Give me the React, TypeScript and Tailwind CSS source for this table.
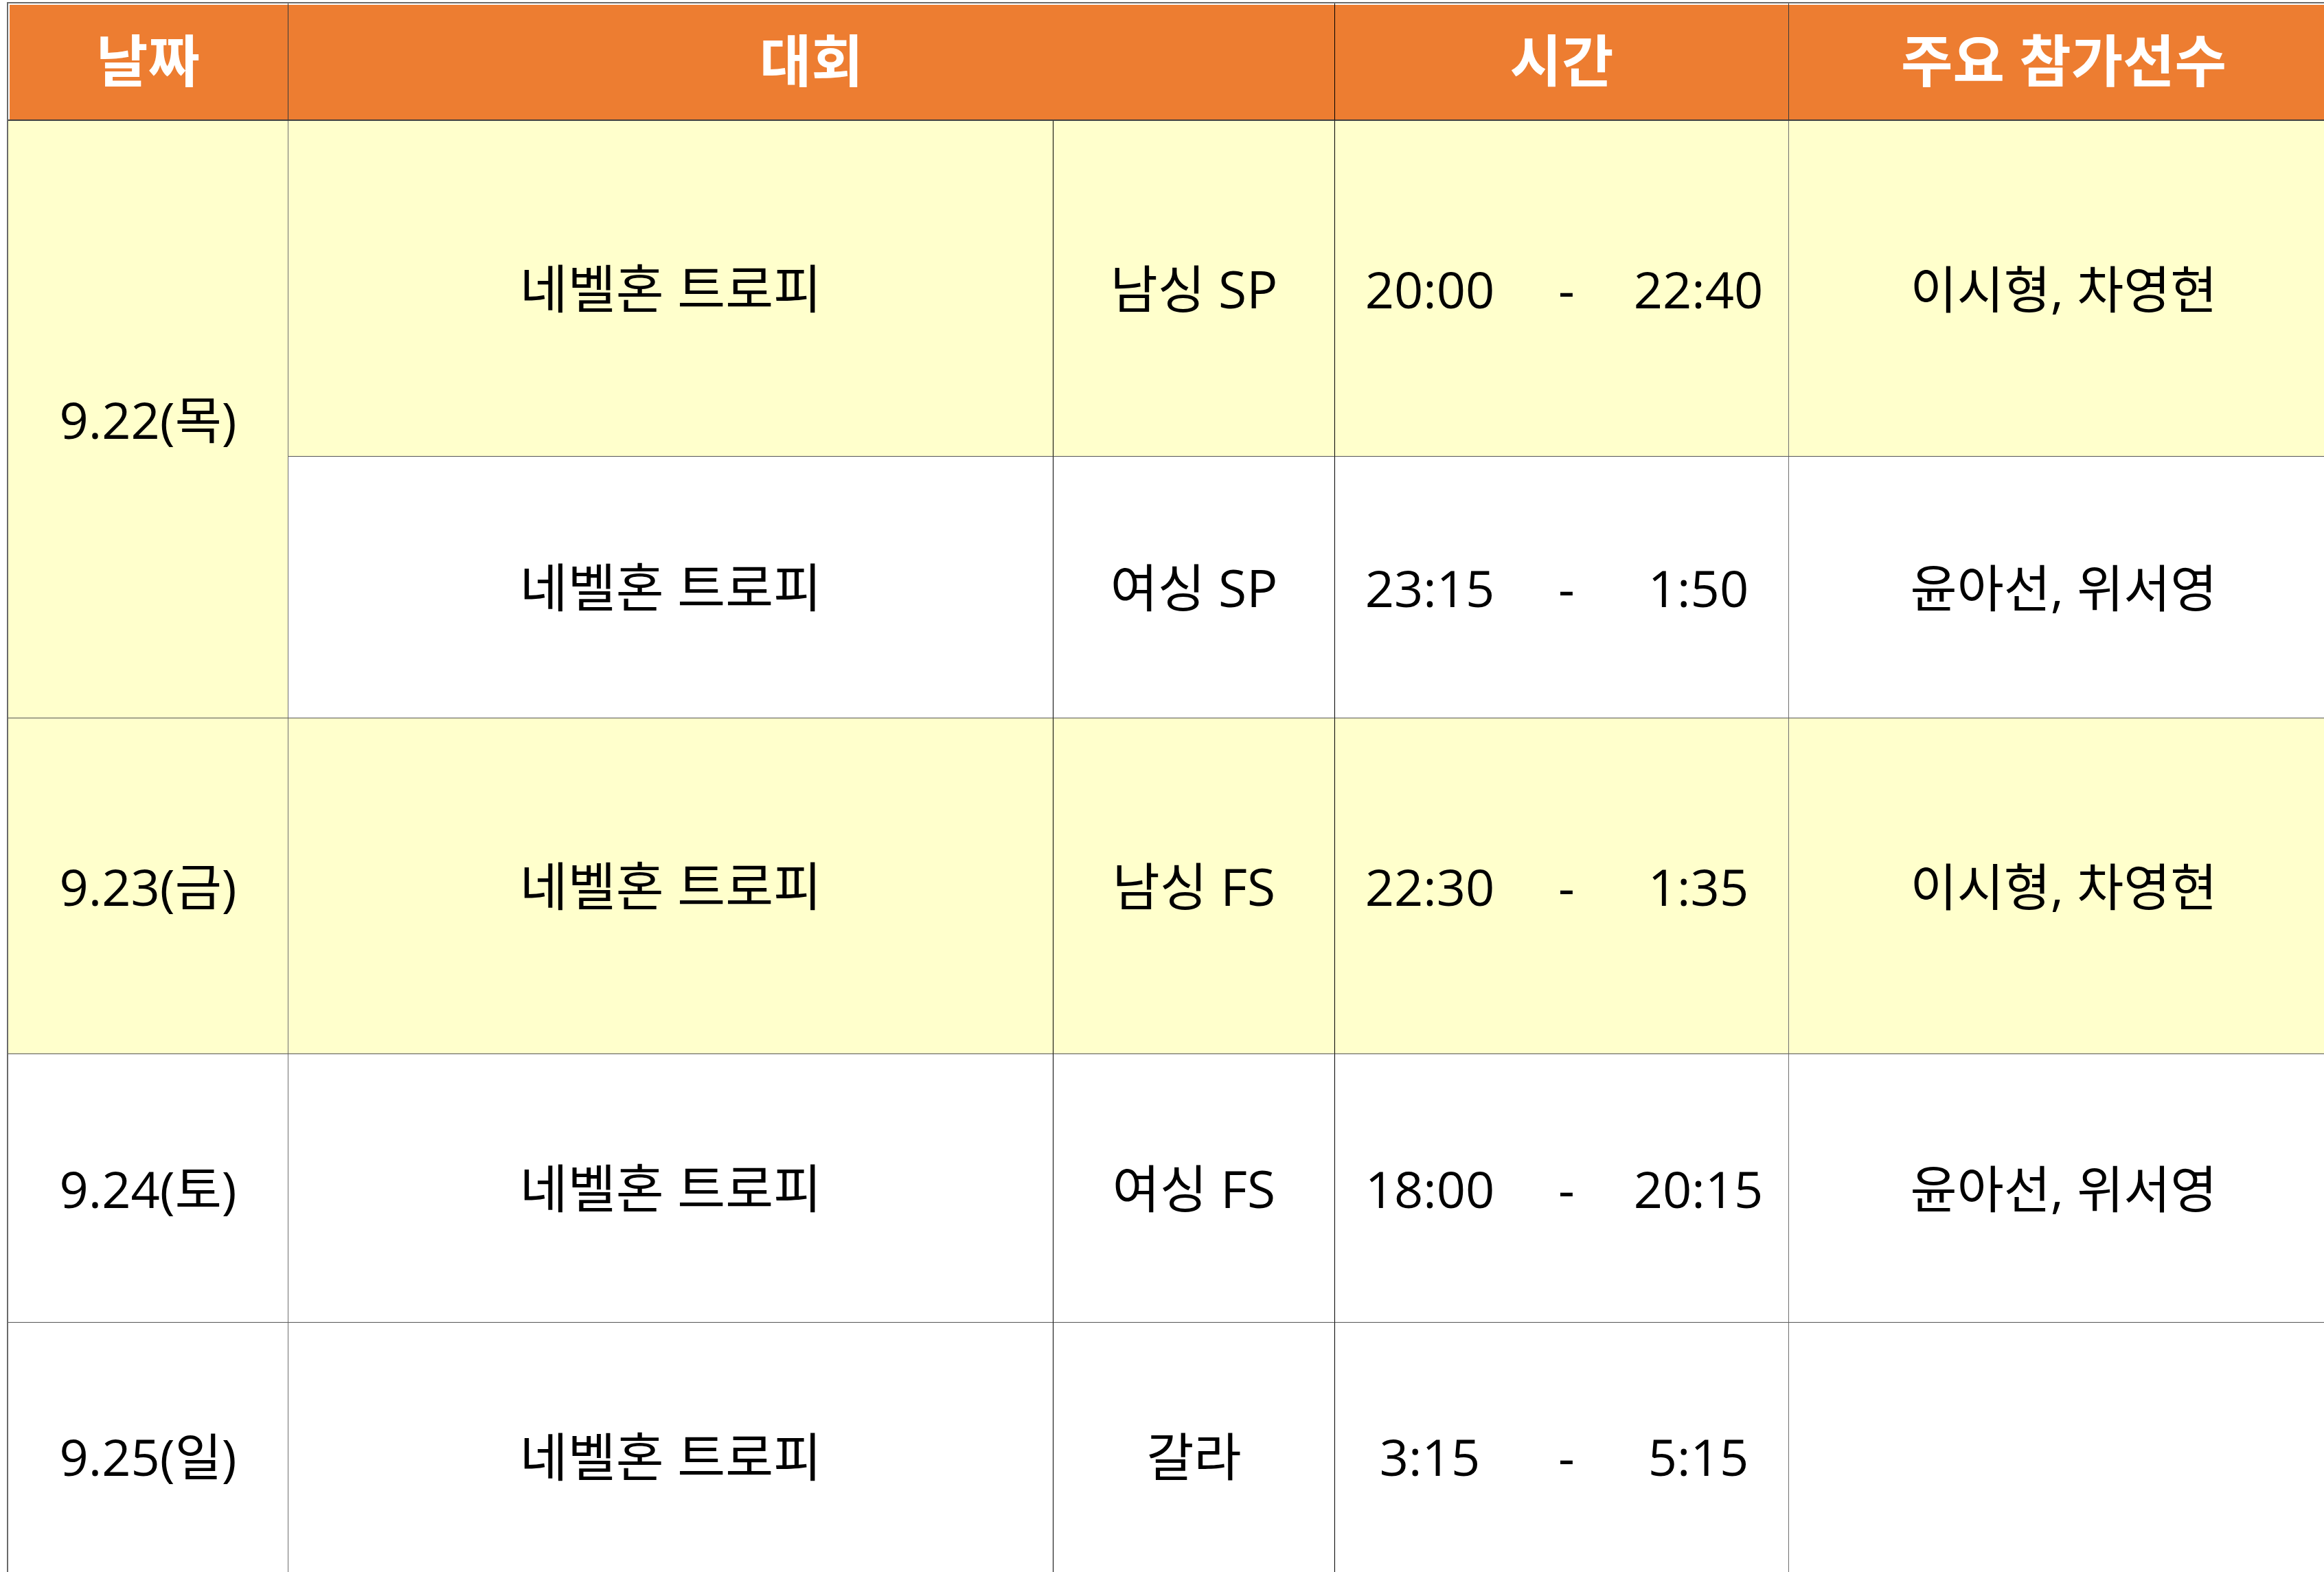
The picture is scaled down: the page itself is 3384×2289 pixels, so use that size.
import clsx from 'clsx'

type Row = {
  date?: { label: string; span?: boolean }
  event: string
  kind: string
  start: string
  end: string
  players: string
  yellow: boolean
}

const rows: Row[] = [
  { date: { label: '9.22(목)', span: true }, event: '네벨혼 트로피', kind: '남싱 SP', start: '20:00', end: '22:40', players: '이시형, 차영현', yellow: true },
  { event: '네벨혼 트로피', kind: '여싱 SP', start: '23:15', end: '1:50', players: '윤아선, 위서영', yellow: false },
  { date: { label: '9.23(금)' }, event: '네벨혼 트로피', kind: '남싱 FS', start: '22:30', end: '1:35', players: '이시형, 차영현', yellow: true },
  { date: { label: '9.24(토)' }, event: '네벨혼 트로피', kind: '여싱 FS', start: '18:00', end: '20:15', players: '윤아선, 위서영', yellow: false },
  { date: { label: '9.25(일)' }, event: '네벨혼 트로피', kind: '갈라', start: '3:15', end: '5:15', players: '', yellow: false },
]

function Cell({ children, className }: { children?: React.ReactNode; className?: string }) {
  return (
    <div className={clsx('flex items-center justify-center border-b border-b-[#555]', className)}>
      {children}
    </div>
  )
}

export default function App() {
  return (
    <div className="h-[2289px] w-[3384px] overflow-hidden bg-white font-['Open_Sans','Noto_Sans_CJK_KR',sans-serif] text-black">
      <div className="ml-[10px] mt-[3px] w-max border-l-2 border-t-2 border-[#6a6a6a]">
        <div className="grid grid-cols-[408px_1114px_410px_661px_800px] grid-rows-[171px_489px_381px_489px_391px_390px]">
          {/* Header */}
          <div className="flex items-center justify-center border-r border-b-2 border-r-[#3a3a3a] border-b-[#404040] bg-[#ed7d31] pb-1 text-[82px] font-bold text-white shadow-[inset_2px_2px_0_#fff]">
            날짜
          </div>
          <div className="col-span-2 flex items-center justify-center border-r border-b-2 border-r-[#000] border-b-[#404040] bg-[#ed7d31] pb-1 text-[82px] font-bold text-white shadow-[inset_0_2px_0_#fff]">
            대회
          </div>
          <div className="flex items-center justify-center border-r border-b-2 border-r-[#3a3a3a] border-b-[#404040] bg-[#ed7d31] pb-1 text-[82px] font-bold text-white shadow-[inset_0_2px_0_#fff]">
            시간
          </div>
          <div className="flex items-center justify-center border-b-2 border-b-[#404040] bg-[#ed7d31] pb-1 text-[82px] font-bold text-white shadow-[inset_0_2px_0_#fff]">
            주요 참가선수
          </div>

          {/* Body */}
          {rows.map((row, i) => {
            const bg = row.yellow ? 'bg-[#ffffcc]' : 'bg-white'
            return [
              row.date && (
                <Cell
                  key={`d${i}`}
                  className={clsx(
                    'border-r border-r-[#6f6f6f] text-[74px]',
                    row.date.span && 'row-span-2',
                    row.yellow || row.date.span ? 'bg-[#ffffcc]' : 'bg-white'
                  )}
                >
                  {row.date.label}
                </Cell>
              ),
              <Cell key={`e${i}`} className={clsx('border-r border-r-[#000] text-[76px]', bg)}>
                {row.event}
              </Cell>,
              <Cell key={`k${i}`} className={clsx('border-r border-r-[#000] text-[75px]', bg)}>
                {row.kind}
              </Cell>,
              <Cell key={`t${i}`} className={clsx('border-r border-r-[#6f6f6f] text-[74px]', bg)}>
                <div className="grid w-full grid-cols-[276px_1fr_262px] items-center text-center">
                  <span>{row.start}</span>
                  <span>-</span>
                  <span>{row.end}</span>
                </div>
              </Cell>,
              <Cell key={`p${i}`} className={clsx('text-[74px]', bg)}>
                {row.players}
              </Cell>,
            ]
          })}
        </div>
      </div>
    </div>
  )
}
